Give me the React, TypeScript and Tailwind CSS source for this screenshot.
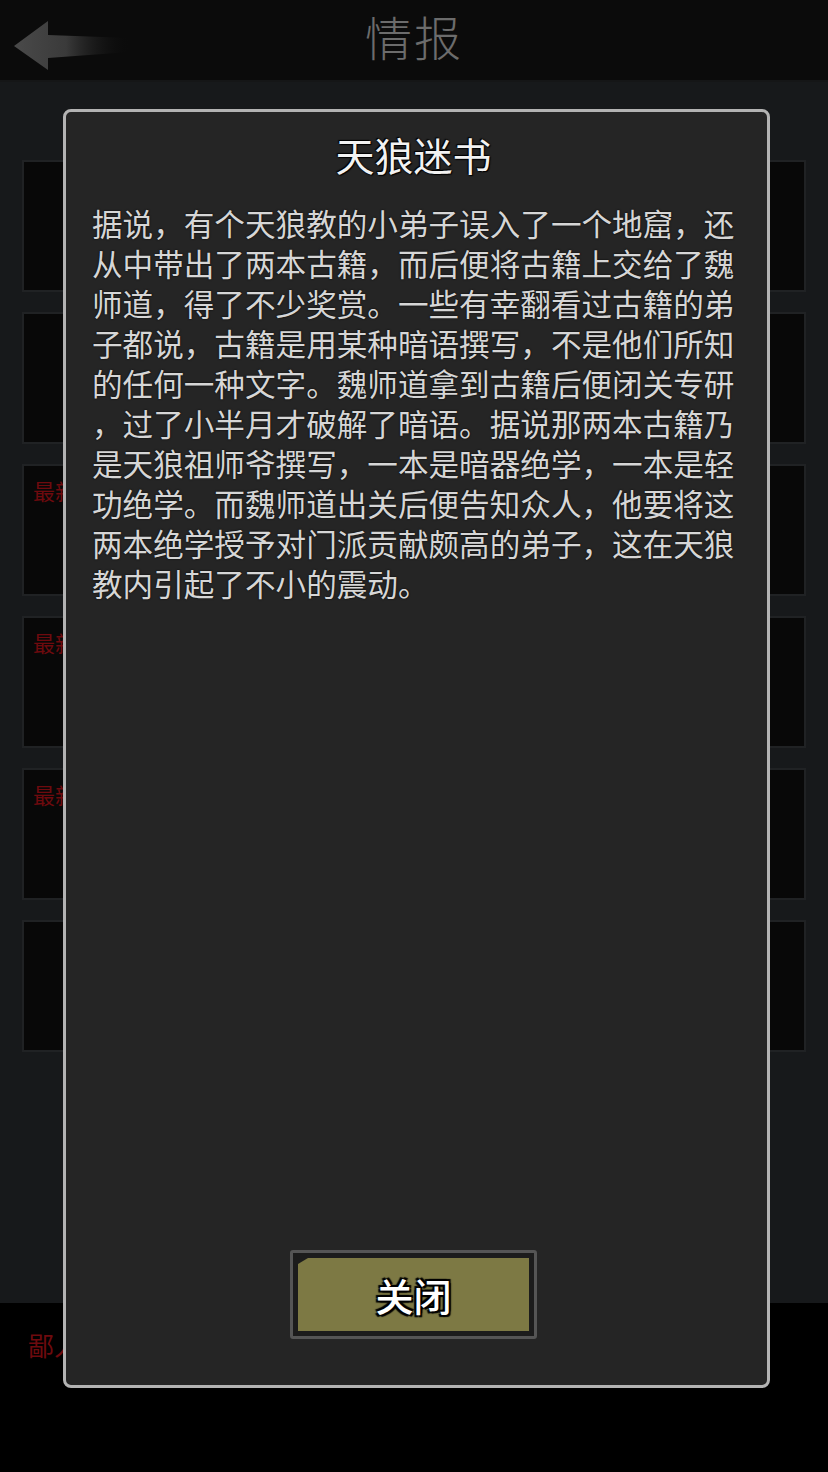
import React from "react";

const bodyLines = [
    "据说，有个天狼教的小弟子误入了一个地窟，还",
    "从中带出了两本古籍，而后便将古籍上交给了魏",
    "师道，得了不少奖赏。一些有幸翻看过古籍的弟",
    "子都说，古籍是用某种暗语撰写，不是他们所知",
    "的任何一种文字。魏师道拿到古籍后便闭关专研",
    "，过了小半月才破解了暗语。据说那两本古籍乃",
    "是天狼祖师爷撰写，一本是暗器绝学，一本是轻",
    "功绝学。而魏师道出关后便告知众人，他要将这",
    "两本绝学授予对门派贡献颇高的弟子，这在天狼",
    "教内引起了不小的震动。",
];

// red headline shown in some of the list cards
const cards = [null, null, "最新", "最新", "最新", null];

const cjk = "font-['Noto_Sans_CJK_SC','Noto_Sans',sans-serif]";

function BackArrow() {
    return (
        <svg width="130" height="70" viewBox="0 0 130 70">
            <defs>
                <linearGradient id="arrowFade" x1="0" y1="0" x2="1" y2="0">
                    <stop offset="0" stopColor="#4a4a4a"/>
                    <stop offset="0.45" stopColor="#3a3a3a"/>
                    <stop offset="1" stopColor="#0b0b0b" stopOpacity="0"/>
                </linearGradient>
            </defs>
            <polygon
                points="14,42 48,17 48,31 130,34 130,48 48,54 48,66"
                fill="url(#arrowFade)"
            />
        </svg>
    );
}

export default function App() {
    return (
        <div className={`relative w-[828px] h-[1472px] bg-black overflow-hidden ${cjk}`}>
            {/* top bar */}
            <div className="relative h-[82px] bg-[#0b0b0b] border-b-2 border-[#151617] flex items-start justify-center">
                <div className="absolute left-0 top-[4px]">
                    <BackArrow/>
                </div>
                <span className="mt-[6px] text-[47px] leading-[60px] font-light text-[#6c6c6c] tracking-[2px]">情报</span>
            </div>

            {/* list of reports */}
            <div className="h-[1221px] bg-[#17191b] px-[22px] pt-[78px] flex flex-col gap-[20px]">
                {cards.map((tag, i) => (
                    <div key={i} className="h-[132px] border-2 border-[#202224] bg-[#080808] px-[9px] pt-[8px]">
                        {tag && <span className="text-[22px] text-[#6e0a0e]">{tag}</span>}
                    </div>
                ))}
            </div>

            <div className="px-[28px] pt-[22px] text-[26px] text-[#6e0a0e]">鄙人</div>

            {/* report dialog */}
            <div className="absolute left-[63px] top-[109px] w-[707px] h-[1279px] rounded-[8px] border-[3px] border-[#b3b3b3] bg-[#252525] flex flex-col items-center pt-[20px] pb-[46px]">
                <h1 className="mr-[6px] text-[39px] leading-[44px] font-normal text-[#f2f2f2] [text-shadow:0_0_2px_#000,1px_1px_1px_#000,-1px_-1px_1px_#000]">
                    天狼迷书
                </h1>
                <div className="mt-[27px] mr-[4px] w-[645px] text-[30.6px] leading-[40px] text-[#d6d6d6] [text-shadow:0_0_2px_#000]">
                    {bodyLines.map((line, i) => (
                        <div key={i} className="whitespace-nowrap">{line}</div>
                    ))}
                </div>

                <div className="mt-auto mr-[6px] w-[247px] h-[89px] rounded-[3px] border-[3px] border-[#555555] bg-[#1c1c1c] p-[5px]">
                    <div className="h-full bg-[#7d7944] [clip-path:polygon(10px_0,100%_0,100%_100%,0_100%,0_6px)] flex items-center justify-center">
                        <span className="text-[38px] font-medium text-white [text-shadow:0_0_2px_#000,2px_2px_1px_#000,-2px_-2px_1px_#000,2px_-2px_1px_#000,-2px_2px_1px_#000]">
                            关闭
                        </span>
                    </div>
                </div>
            </div>
        </div>
    );
}
